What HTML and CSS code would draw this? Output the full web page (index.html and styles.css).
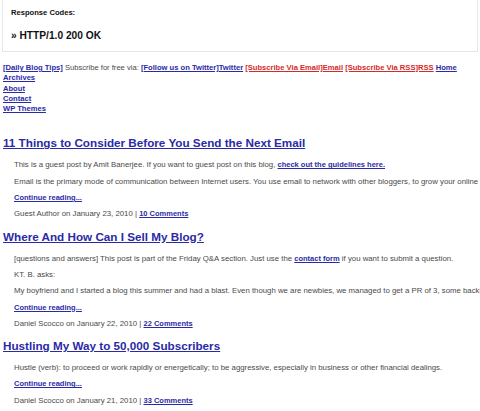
FILE: index.html
```html
<!DOCTYPE html>
<html>
<head>
<meta charset="utf-8">
<link rel="stylesheet" href="styles.css">
</head>
<body>
<div class="resp">
  <div class="resp-label">Response Codes:</div>
  <div class="resp-code">» HTTP/1.0 200 OK</div>
</div>
<div class="nav">
  <div class="nav-line"><a href="#">[Daily Blog Tips]</a> Subscribe for free via: <a href="#">[Follow us on Twitter]Twitter</a> <a class="red" href="#">[Subscribe Via Email]Email</a> <a class="red" href="#">[Subscribe Via RSS]RSS</a> <a href="#">Home</a></div>
  <div class="nav-line"><a href="#">Archives</a></div>
  <div class="nav-line"><a href="#">About</a></div>
  <div class="nav-line"><a href="#">Contact</a></div>
  <div class="nav-line"><a href="#">WP Themes</a></div>
</div>
<div class="posts">
  <div class="post">
    <h2 class="post-title"><a href="#">11 Things to Consider Before You Send the Next Email</a></h2>
    <div class="post-body">
      <p>This is a guest post by Amit Banerjee. If you want to guest post on this blog, <a href="#">check out the guidelines here.</a></p>
      <p>Email is the primary mode of communication between Internet users. You use email to network with other bloggers, to grow your online presence and to keep in touch with readers.</p>
      <p><a href="#">Continue reading...</a></p>
      <p>Guest Author on January 23, 2010 | <a href="#">10 Comments</a></p>
    </div>
  </div>
  <div class="post">
    <h2 class="post-title"><a href="#">Where And How Can I Sell My Blog?</a></h2>
    <div class="post-body">
      <p>[questions and answers] This post is part of the Friday Q&amp;A section. Just use the <a href="#">contact form</a> if you want to submit a question.</p>
      <p>KT. B. asks:</p>
      <p>My boyfriend and I started a blog this summer and had a blast. Even though we are newbies, we managed to get a PR of 3, some backlinks and a few hundred visitors a day.</p>
      <p><a href="#">Continue reading...</a></p>
      <p>Daniel Scocco on January 22, 2010 | <a href="#">22 Comments</a></p>
    </div>
  </div>
  <div class="post">
    <h2 class="post-title"><a href="#">Hustling My Way to 50,000 Subscribers</a></h2>
    <div class="post-body">
      <p>Hustle (verb): to proceed or work rapidly or energetically; to be aggressive, especially in business or other financial dealings.</p>
      <p><a href="#">Continue reading...</a></p>
      <p>Daniel Scocco on January 21, 2010 | <a href="#">33 Comments</a></p>
    </div>
  </div>
</div>
</body>
</html>
```
FILE: styles.css
```css
html, body {
  margin: 0;
  padding: 0;
  background: #fff;
  overflow: hidden;
}
body {
  font-family: "Liberation Sans", Arial, sans-serif;
  color: #4a4a4a;
  width: 480px;
  height: 411px;
}
a {
  color: #2a2aa6;
  font-weight: bold;
}
.resp {
  margin: 0 2px 0 2px;
  border: 1px solid #e6e6e6;
  border-top: none;
  height: 52px;
  padding: 0 0 0 8px;
  box-sizing: border-box;
}
.resp-label {
  font-size: 7.6px;
  font-weight: bold;
  color: #111;
  padding-top: 8px;
  line-height: 10px;
}
.resp-code {
  font-size: 10.2px;
  font-weight: bold;
  color: #111;
  margin-top: 12px;
  line-height: 12px;
}
.nav {
  margin-top: 11px;
  padding-left: 3px;
  font-size: 7.6px;
  line-height: 10.3px;
  white-space: nowrap;
}
.nav-line {
  height: 10.3px;
}
.nav .red {
  color: #d42a2a;
}
.posts {
  margin-top: 22px;
}
.post-title {
  margin: 0;
  padding-left: 3px;
  font-size: 11.7px;
  line-height: 14px;
}
.post-title a {
  color: #2a2aa6;
}
.post-body {
  padding-left: 14px;
  padding-top: 7px;
  font-size: 7.8px;
  white-space: nowrap;
}
.post-body a {
  font-size: 7.5px;
}
.post-body p {
  margin: 0;
  line-height: 16.3px;
}
.post {
  margin-bottom: 7px;
}
```
